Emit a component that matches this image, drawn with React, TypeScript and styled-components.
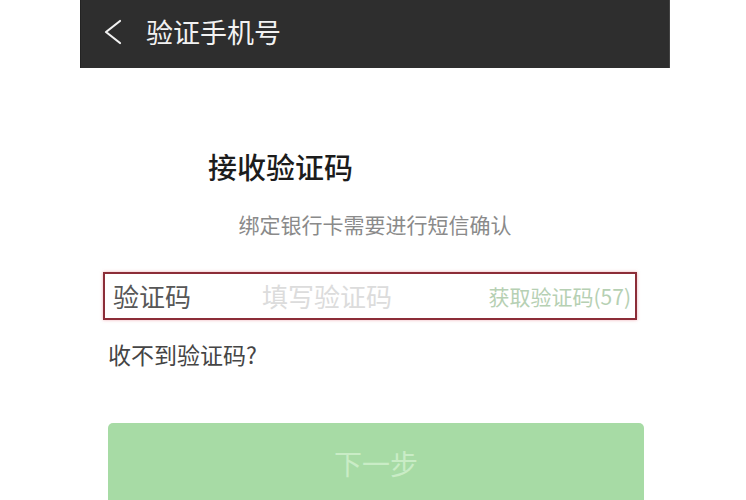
import React from 'react';
import styled, { createGlobalStyle } from 'styled-components';

const GlobalStyle = createGlobalStyle`
  html, body {
    margin: 0;
    padding: 0;
    background: #ffffff;
  }

  body {
    font-family: "Noto Sans CJK SC", "Noto Sans", sans-serif;
  }
`;

const Page = styled.div`
  width: 746px;
  height: 500px;
  overflow: hidden;
  display: flex;
  padding-left: 80px;
  box-sizing: border-box;
`;

const Phone = styled.div`
  width: 590px;
  display: flex;
  flex-direction: column;
`;

const Header = styled.header`
  height: 68px;
  flex: none;
  background: #2e2e2e;
  display: flex;
  align-items: center;
  gap: 24px;
  padding-left: 23px;
  border-left: 1px solid #232323;
  border-right: 1px solid #444;
  box-sizing: border-box;
`;

const BackIcon = styled.svg`
  width: 18px;
  height: 26px;
  flex: none;
  margin-top: -4px;
`;

const HeaderTitle = styled.h1`
  margin: 0;
  margin-top: -4px;
  font-size: 27px;
  line-height: 34px;
  font-weight: 400;
  color: #f2f2f2;
`;

const Heading = styled.h2`
  margin: 80px 0 0;
  padding-left: 128px;
  font-size: 29px;
  line-height: 36px;
  font-weight: 500;
  color: #1c1c1c;
`;

const Subtitle = styled.p`
  margin: 26px 0 0;
  text-align: center;
  font-size: 21px;
  line-height: 28px;
  color: #8a8a8a;
`;

const CodeField = styled.div`
  margin: 34px 33px 0 23px;
  height: 48px;
  flex: none;
  box-sizing: border-box;
  border: 2px solid #8c2d38;
  box-shadow: 0 0 3px rgba(225, 110, 120, 0.55);
  display: flex;
  align-items: center;
  padding: 0 4px 0 8px;
`;

const FieldLabel = styled.span`
  width: 149px;
  flex: none;
  font-size: 26px;
  line-height: 32px;
  color: #575757;
`;

const FieldInput = styled.span`
  flex: 1;
  font-size: 26px;
  line-height: 32px;
  color: #dcdcdc;
`;

const ResendLink = styled.span`
  font-size: 21px;
  line-height: 28px;
  color: #b6d0b3;
`;

const HelpLink = styled.p`
  margin: 19px 0 0;
  padding-left: 28px;
  font-size: 23px;
  line-height: 30px;
  color: #454545;
`;

const NextButton = styled.button`
  margin: 54px 26px 0 28px;
  height: 82px;
  border: none;
  border-radius: 5px;
  background: #a7dba5;
  color: #c9ecc6;
  font-family: inherit;
  font-size: 28px;
  display: flex;
  align-items: center;
  justify-content: center;
  padding-bottom: 4px;
  flex: none;
`;

const App: React.FC = () => {
  return (
    <Page>
      <GlobalStyle />
      <Phone>
        <Header>
          <BackIcon viewBox="0 0 18 26">
            <polyline
              points="16,2 2,13 16,24"
              fill="none"
              stroke="#f2f2f2"
              strokeWidth="2.2"
              strokeLinecap="round"
              strokeLinejoin="round"
            />
          </BackIcon>
          <HeaderTitle>验证手机号</HeaderTitle>
        </Header>

        <Heading>接收验证码</Heading>
        <Subtitle>绑定银行卡需要进行短信确认</Subtitle>

        <CodeField>
          <FieldLabel>验证码</FieldLabel>
          <FieldInput>填写验证码</FieldInput>
          <ResendLink>获取验证码(57)</ResendLink>
        </CodeField>

        <HelpLink>收不到验证码?</HelpLink>

        <NextButton>下一步</NextButton>
      </Phone>
    </Page>
  );
};

export default App;
